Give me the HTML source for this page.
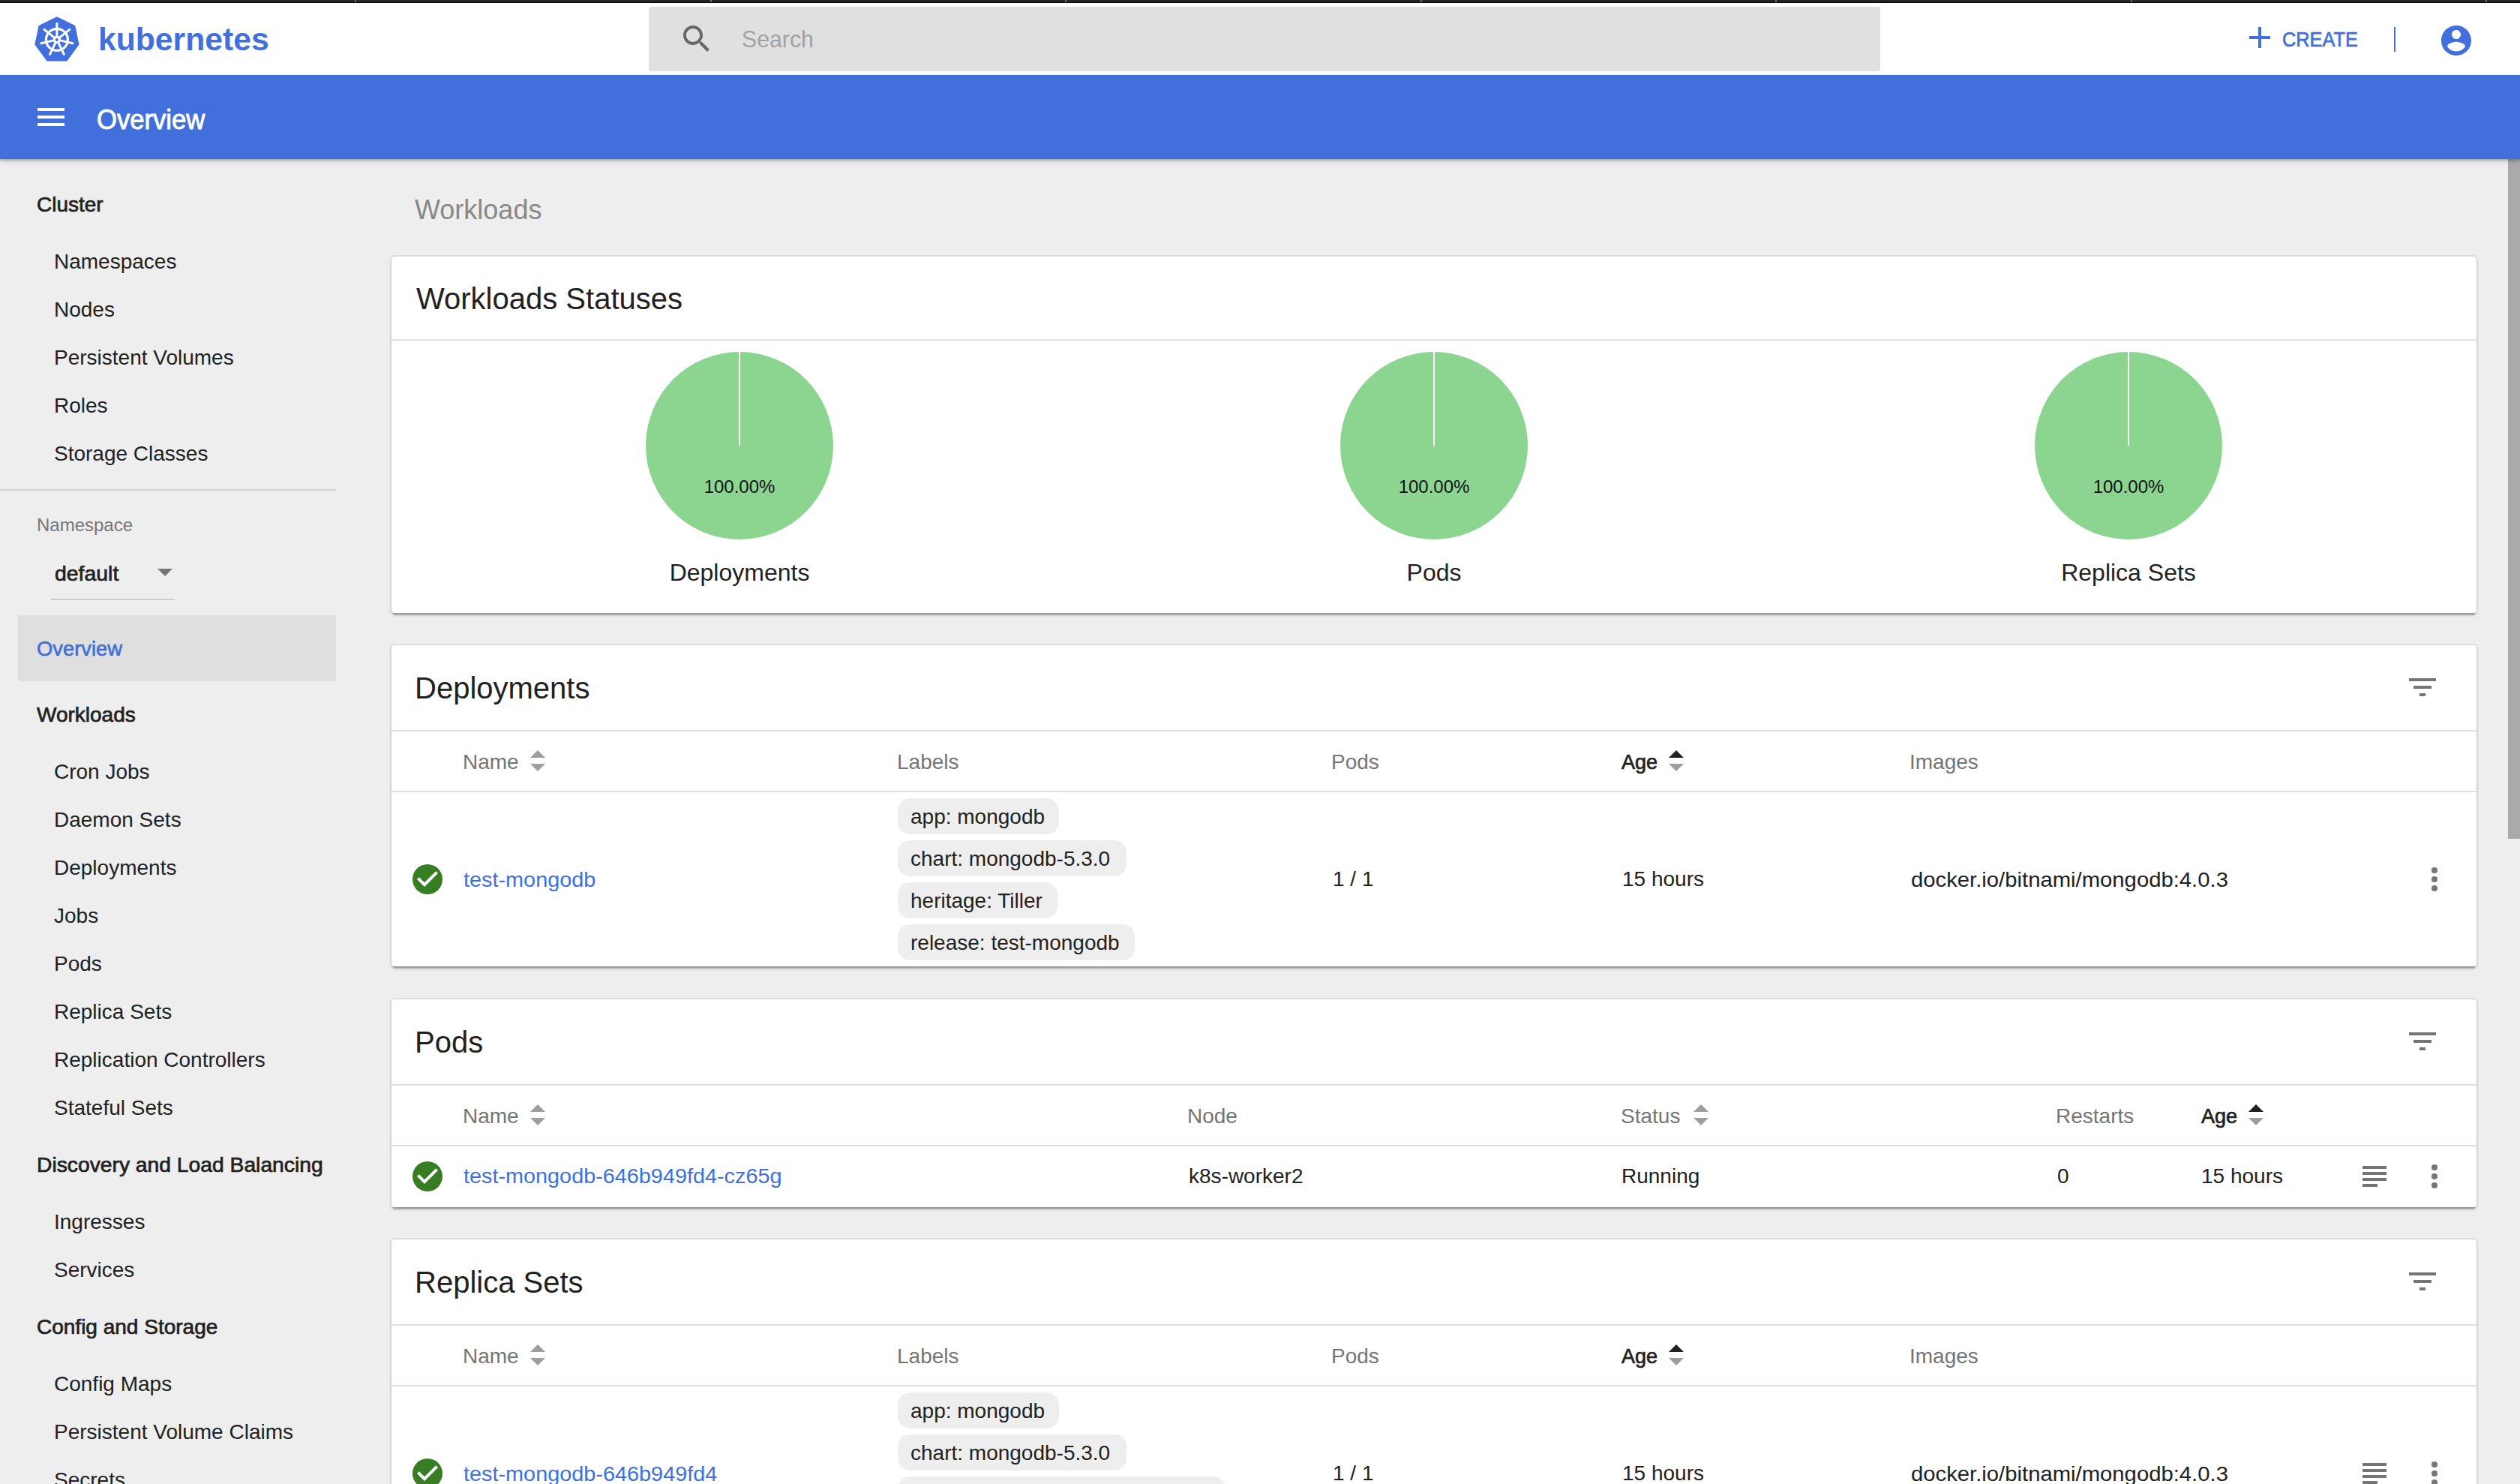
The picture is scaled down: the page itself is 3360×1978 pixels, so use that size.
<!DOCTYPE html>
<html><head><meta charset="utf-8"><title>Overview - Kubernetes Dashboard</title>
<style>
html,body{margin:0;padding:0;}
body{width:3360px;height:1978px;overflow:hidden;position:relative;background:#eeeeee;font-family:"Liberation Sans",sans-serif;}
body>div,body>svg{position:absolute;}
.t{white-space:nowrap;}
</style></head><body>
<div style="left:0px;top:0px;width:3360px;height:3px;background:#242424;"></div>
<div style="left:0px;top:3px;width:3360px;height:1px;background:#050505;"></div>
<div style="left:473px;top:0px;width:2px;height:3px;background:#6a6a6a;"></div>
<div style="left:947px;top:0px;width:2px;height:3px;background:#6a6a6a;"></div>
<div style="left:1420px;top:0px;width:2px;height:3px;background:#6a6a6a;"></div>
<div style="left:1894px;top:0px;width:2px;height:3px;background:#6a6a6a;"></div>
<div style="left:2367px;top:0px;width:2px;height:3px;background:#6a6a6a;"></div>
<div style="left:2841px;top:0px;width:2px;height:3px;background:#6a6a6a;"></div>
<div style="left:3314px;top:0px;width:2px;height:3px;background:#6a6a6a;"></div>
<div style="left:0px;top:4px;width:3360px;height:96px;background:#ffffff;"></div>
<svg style="left:40px;top:16px" width="72" height="72" viewBox="0 0 72 72"><polygon points="35.90,8.00 58.80,19.26 63.81,43.00 48.56,63.78 23.24,63.78 7.99,43.00 13.00,19.26" fill="#416fdc" stroke="#416fdc" stroke-width="3.2" stroke-linejoin="round"/><circle cx="35.900000000000006" cy="36.9" r="14.5" fill="none" stroke="#fff" stroke-width="3.2"/><line x1="35.900000000000006" y1="36.9" x2="35.90" y2="15.30" stroke="#fff" stroke-width="3" stroke-linecap="round"/><line x1="35.900000000000006" y1="36.9" x2="52.79" y2="23.43" stroke="#fff" stroke-width="3" stroke-linecap="round"/><line x1="35.900000000000006" y1="36.9" x2="56.96" y2="41.71" stroke="#fff" stroke-width="3" stroke-linecap="round"/><line x1="35.900000000000006" y1="36.9" x2="45.27" y2="56.36" stroke="#fff" stroke-width="3" stroke-linecap="round"/><line x1="35.900000000000006" y1="36.9" x2="26.53" y2="56.36" stroke="#fff" stroke-width="3" stroke-linecap="round"/><line x1="35.900000000000006" y1="36.9" x2="14.84" y2="41.71" stroke="#fff" stroke-width="3" stroke-linecap="round"/><line x1="35.900000000000006" y1="36.9" x2="19.01" y2="23.43" stroke="#fff" stroke-width="3" stroke-linecap="round"/><circle cx="35.900000000000006" cy="36.9" r="5.2" fill="#fff"/><circle cx="35.900000000000006" cy="36.9" r="2" fill="#416fdc"/></svg>
<div class="t" style="left:131px;top:29px;font-size:42px;line-height:47px;color:#416fdc;font-weight:bold;transform:scaleX(1.016);transform-origin:0 0;">kubernetes</div>
<div style="left:865px;top:9px;width:1642px;height:86px;background:#e0e0e0;border-radius:4px;"></div>
<svg style="left:905px;top:28px" width="48" height="48" viewBox="0 0 24 24"><path fill="#676767" d="M15.5 14h-.79l-.28-.27C15.41 12.59 16 11.11 16 9.5 16 5.91 13.09 3 9.5 3S3 5.91 3 9.5 5.91 16 9.5 16c1.61 0 3.09-.59 4.23-1.57l.27.28v.79l5 4.99L20.49 19l-4.99-5zm-6 0C7.01 14 5 11.99 5 9.5S7.01 5 9.5 5 14 7.01 14 9.5 11.99 14 9.5 14z"/></svg>
<div class="t" style="left:989px;top:34px;font-size:32px;line-height:36px;color:#a2a2a2;transform:scaleX(0.945);transform-origin:0 0;">Search</div>
<svg style="left:2989px;top:26px" width="48" height="48" viewBox="0 0 24 24"><path fill="#416fdc" d="M19 13h-6v6h-2v-6H5v-2h6V5h2v6h6v2z"/></svg>
<div class="t" style="left:3043px;top:37px;font-size:28px;line-height:31px;color:#416fdc;-webkit-text-stroke:0.7px #416fdc;transform:scaleX(0.904);transform-origin:0 0;">CREATE</div>
<div style="left:3192px;top:36px;width:2px;height:33px;background:#416fdc;"></div>
<svg style="left:3251px;top:30px" width="48" height="48" viewBox="0 0 24 24"><path fill="#416fdc" d="M12 2C6.48 2 2 6.48 2 12s4.48 10 10 10 10-4.48 10-10S17.52 2 12 2zm0 3c1.66 0 3 1.34 3 3s-1.34 3-3 3-3-1.34-3-3 1.34-3 3-3zm0 14.2c-2.5 0-4.71-1.28-6-3.22.03-1.99 4-3.08 6-3.08 1.99 0 5.97 1.09 6 3.08-1.29 1.94-3.5 3.22-6 3.22z"/></svg>
<div style="left:0px;top:100px;width:3360px;height:112px;background:#416fdc;box-shadow:0 2px 3px rgba(0,0,0,.22),0 3px 7px rgba(0,0,0,.12);z-index:2;"></div>
<svg style="z-index:3;left:44px;top:132px" width="48" height="48" viewBox="0 0 24 24"><path fill="#fff" d="M3 18h18v-2H3v2zm0-5h18v-2H3v2zm0-7v2h18V6H3z"/></svg>
<div class="t" style="left:129px;top:139px;font-size:36px;line-height:41px;color:#ffffff;-webkit-text-stroke:0.9px #ffffff;transform:scaleX(0.962);transform-origin:0 0;z-index:3;">Overview</div>
<div style="left:3344px;top:212px;width:16px;height:906px;background:#aaaaaa;"></div>
<div class="t" style="left:49px;top:257px;font-size:28px;line-height:31px;color:#212121;-webkit-text-stroke:0.7px #212121;">Cluster</div>
<div class="t" style="left:72px;top:333px;font-size:28px;line-height:31px;color:#212121;">Namespaces</div>
<div class="t" style="left:72px;top:397px;font-size:28px;line-height:31px;color:#212121;">Nodes</div>
<div class="t" style="left:72px;top:461px;font-size:28px;line-height:31px;color:#212121;">Persistent Volumes</div>
<div class="t" style="left:72px;top:525px;font-size:28px;line-height:31px;color:#212121;">Roles</div>
<div class="t" style="left:72px;top:589px;font-size:28px;line-height:31px;color:#212121;">Storage Classes</div>
<div style="left:0px;top:652px;width:448px;height:2px;background:#d3d3d3;"></div>
<div class="t" style="left:49px;top:686px;font-size:24px;line-height:27px;color:#757575;">Namespace</div>
<div class="t" style="left:73px;top:749px;font-size:28px;line-height:31px;color:#212121;-webkit-text-stroke:0.7px #212121;transform:scaleX(1.015);transform-origin:0 0;">default</div>
<svg style="left:210px;top:758px" width="20" height="11" viewBox="0 0 20 11"><polygon points="0,0 20,0 10,10" fill="#757575"/></svg>
<div style="left:68px;top:798px;width:165px;height:2px;background:#cdcdcd;"></div>
<div style="left:24px;top:820px;width:424px;height:88px;background:#dfdfdf;border-radius:4px;"></div>
<div class="t" style="left:49px;top:849px;font-size:28px;line-height:31px;color:#416fdc;-webkit-text-stroke:0.7px #416fdc;transform:scaleX(0.977);transform-origin:0 0;">Overview</div>
<div class="t" style="left:49px;top:937px;font-size:28px;line-height:31px;color:#212121;-webkit-text-stroke:0.7px #212121;">Workloads</div>
<div class="t" style="left:72px;top:1013px;font-size:28px;line-height:31px;color:#212121;">Cron Jobs</div>
<div class="t" style="left:72px;top:1077px;font-size:28px;line-height:31px;color:#212121;">Daemon Sets</div>
<div class="t" style="left:72px;top:1141px;font-size:28px;line-height:31px;color:#212121;">Deployments</div>
<div class="t" style="left:72px;top:1205px;font-size:28px;line-height:31px;color:#212121;">Jobs</div>
<div class="t" style="left:72px;top:1269px;font-size:28px;line-height:31px;color:#212121;">Pods</div>
<div class="t" style="left:72px;top:1333px;font-size:28px;line-height:31px;color:#212121;">Replica Sets</div>
<div class="t" style="left:72px;top:1397px;font-size:28px;line-height:31px;color:#212121;">Replication Controllers</div>
<div class="t" style="left:72px;top:1461px;font-size:28px;line-height:31px;color:#212121;">Stateful Sets</div>
<div class="t" style="left:49px;top:1537px;font-size:28px;line-height:31px;color:#212121;-webkit-text-stroke:0.7px #212121;transform:scaleX(1.009);transform-origin:0 0;">Discovery and Load Balancing</div>
<div class="t" style="left:72px;top:1613px;font-size:28px;line-height:31px;color:#212121;">Ingresses</div>
<div class="t" style="left:72px;top:1677px;font-size:28px;line-height:31px;color:#212121;">Services</div>
<div class="t" style="left:49px;top:1753px;font-size:28px;line-height:31px;color:#212121;-webkit-text-stroke:0.7px #212121;">Config and Storage</div>
<div class="t" style="left:72px;top:1829px;font-size:28px;line-height:31px;color:#212121;">Config Maps</div>
<div class="t" style="left:72px;top:1893px;font-size:28px;line-height:31px;color:#212121;">Persistent Volume Claims</div>
<div class="t" style="left:72px;top:1957px;font-size:28px;line-height:31px;color:#212121;">Secrets</div>
<div class="t" style="left:553px;top:259px;font-size:36px;line-height:41px;color:#888888;">Workloads</div>
<div style="left:522px;top:342px;width:2780px;height:475px;background:#fff;border-radius:4px;box-shadow:0 0 0 2px rgba(0,0,0,.07),0 5px 2px -2px rgba(0,0,0,.26),0 3px 6px 0 rgba(0,0,0,.08);"></div>
<div class="t" style="left:555px;top:376px;font-size:40px;line-height:44px;color:#212121;">Workloads Statuses</div>
<div style="left:522px;top:452px;width:2780px;height:2px;background:#e0e0e0;"></div>
<svg style="left:860px;top:468px" width="252" height="252" viewBox="0 0 252 252"><circle cx="126" cy="126" r="125" fill="#8cd591"/><rect x="125" y="0" width="2" height="126" fill="#fff"/></svg>
<div class="t" style="left:486px;width:1000px;text-align:center;top:635px;font-size:24px;line-height:27px;color:#111111;">100.00%</div>
<div class="t" style="left:486px;width:1000px;text-align:center;top:745px;font-size:32px;line-height:36px;color:#212121;">Deployments</div>
<svg style="left:1786px;top:468px" width="252" height="252" viewBox="0 0 252 252"><circle cx="126" cy="126" r="125" fill="#8cd591"/><rect x="125" y="0" width="2" height="126" fill="#fff"/></svg>
<div class="t" style="left:1412px;width:1000px;text-align:center;top:635px;font-size:24px;line-height:27px;color:#111111;">100.00%</div>
<div class="t" style="left:1412px;width:1000px;text-align:center;top:745px;font-size:32px;line-height:36px;color:#212121;">Pods</div>
<svg style="left:2712px;top:468px" width="252" height="252" viewBox="0 0 252 252"><circle cx="126" cy="126" r="125" fill="#8cd591"/><rect x="125" y="0" width="2" height="126" fill="#fff"/></svg>
<div class="t" style="left:2338px;width:1000px;text-align:center;top:635px;font-size:24px;line-height:27px;color:#111111;">100.00%</div>
<div class="t" style="left:2338px;width:1000px;text-align:center;top:745px;font-size:32px;line-height:36px;color:#212121;">Replica Sets</div>
<div style="left:522px;top:860px;width:2780px;height:428px;background:#fff;border-radius:4px;box-shadow:0 0 0 2px rgba(0,0,0,.07),0 5px 2px -2px rgba(0,0,0,.26),0 3px 6px 0 rgba(0,0,0,.08);"></div>
<div class="t" style="left:553px;top:895px;font-size:40px;line-height:44px;color:#212121;">Deployments</div>
<svg style="left:3206px;top:892px" width="48" height="48" viewBox="0 0 24 24"><path fill="#757575" d="M10 18h4v-2h-4v2zM3 6v2h18V6H3zm3 7h12v-2H6v2z"/></svg>
<div style="left:522px;top:973px;width:2780px;height:2px;background:#e0e0e0;"></div>
<div class="t" style="left:617px;top:1000px;font-size:28px;line-height:31px;color:#757575;">Name</div>
<div class="t" style="left:1196px;top:1000px;font-size:28px;line-height:31px;color:#757575;">Labels</div>
<div class="t" style="left:1775px;top:1000px;font-size:28px;line-height:31px;color:#757575;">Pods</div>
<div class="t" style="left:2162px;top:1000px;font-size:28px;line-height:31px;color:#212121;-webkit-text-stroke:0.7px #212121;transform:scaleX(0.966);transform-origin:0 0;">Age</div>
<div class="t" style="left:2546px;top:1000px;font-size:28px;line-height:31px;color:#757575;">Images</div>
<svg style="left:707px;top:1000px" width="20" height="28" viewBox="0 0 20 28"><polygon points="0,10 10,0 20,10" fill="#9e9e9e"/><polygon points="0,18 20,18 10,28" fill="#9e9e9e"/></svg>
<svg style="left:2225px;top:1000px" width="20" height="28" viewBox="0 0 20 28"><polygon points="0,10 10,0 20,10" fill="#212121"/><polygon points="0,18 20,18 10,28" fill="#9e9e9e"/></svg>
<div style="left:522px;top:1054px;width:2780px;height:2px;background:#e0e0e0;"></div>
<svg style="left:546px;top:1148px" width="48" height="48" viewBox="0 0 24 24"><circle cx="12" cy="12" r="10" fill="#377d22"/><path fill="#fff" d="M10 17l-5-5 1.41-1.41L10 14.17l7.59-7.59L19 8l-9 9z"/></svg>
<div class="t" style="left:618px;top:1157px;font-size:28px;line-height:31px;color:#416fdc;transform:scaleX(1.03);transform-origin:0 0;">test-mongodb</div>
<div style="left:1197px;top:1064px;width:215px;height:48px;background:#eeeeee;border-radius:16px;"></div>
<div class="t" style="left:1214px;top:1073px;font-size:28px;line-height:31px;color:#212121;">app: mongodb</div>
<div style="left:1197px;top:1120px;width:305px;height:48px;background:#eeeeee;border-radius:16px;"></div>
<div class="t" style="left:1214px;top:1129px;font-size:28px;line-height:31px;color:#212121;">chart: mongodb-5.3.0</div>
<div style="left:1197px;top:1176px;width:213px;height:48px;background:#eeeeee;border-radius:16px;"></div>
<div class="t" style="left:1214px;top:1185px;font-size:28px;line-height:31px;color:#212121;">heritage: Tiller</div>
<div style="left:1197px;top:1232px;width:316px;height:48px;background:#eeeeee;border-radius:16px;"></div>
<div class="t" style="left:1214px;top:1241px;font-size:28px;line-height:31px;color:#212121;">release: test-mongodb</div>
<div class="t" style="left:1777px;top:1156px;font-size:28px;line-height:31px;color:#212121;">1 / 1</div>
<div class="t" style="left:2163px;top:1156px;font-size:28px;line-height:31px;color:#212121;">15 hours</div>
<div class="t" style="left:2548px;top:1157px;font-size:28px;line-height:31px;color:#212121;transform:scaleX(1.045);transform-origin:0 0;">docker.io/bitnami/mongodb:4.0.3</div>
<svg style="left:3240px;top:1154px" width="12" height="36" viewBox="0 0 12 36"><circle cx="6" cy="6" r="4" fill="#757575"/><circle cx="6" cy="18" r="4" fill="#757575"/><circle cx="6" cy="30" r="4" fill="#757575"/></svg>
<div style="left:522px;top:1332px;width:2780px;height:277px;background:#fff;border-radius:4px;box-shadow:0 0 0 2px rgba(0,0,0,.07),0 5px 2px -2px rgba(0,0,0,.26),0 3px 6px 0 rgba(0,0,0,.08);"></div>
<div class="t" style="left:553px;top:1367px;font-size:40px;line-height:44px;color:#212121;">Pods</div>
<svg style="left:3206px;top:1364px" width="48" height="48" viewBox="0 0 24 24"><path fill="#757575" d="M10 18h4v-2h-4v2zM3 6v2h18V6H3zm3 7h12v-2H6v2z"/></svg>
<div style="left:522px;top:1445px;width:2780px;height:2px;background:#e0e0e0;"></div>
<div class="t" style="left:617px;top:1472px;font-size:28px;line-height:31px;color:#757575;">Name</div>
<div class="t" style="left:1583px;top:1472px;font-size:28px;line-height:31px;color:#757575;">Node</div>
<div class="t" style="left:2161px;top:1472px;font-size:28px;line-height:31px;color:#757575;">Status</div>
<div class="t" style="left:2741px;top:1472px;font-size:28px;line-height:31px;color:#757575;">Restarts</div>
<div class="t" style="left:2935px;top:1472px;font-size:28px;line-height:31px;color:#212121;-webkit-text-stroke:0.7px #212121;transform:scaleX(0.966);transform-origin:0 0;">Age</div>
<svg style="left:707px;top:1472px" width="20" height="28" viewBox="0 0 20 28"><polygon points="0,10 10,0 20,10" fill="#9e9e9e"/><polygon points="0,18 20,18 10,28" fill="#9e9e9e"/></svg>
<svg style="left:2258px;top:1472px" width="20" height="28" viewBox="0 0 20 28"><polygon points="0,10 10,0 20,10" fill="#9e9e9e"/><polygon points="0,18 20,18 10,28" fill="#9e9e9e"/></svg>
<svg style="left:2998px;top:1472px" width="20" height="28" viewBox="0 0 20 28"><polygon points="0,10 10,0 20,10" fill="#212121"/><polygon points="0,18 20,18 10,28" fill="#9e9e9e"/></svg>
<div style="left:522px;top:1526px;width:2780px;height:2px;background:#e0e0e0;"></div>
<svg style="left:546px;top:1544px" width="48" height="48" viewBox="0 0 24 24"><circle cx="12" cy="12" r="10" fill="#377d22"/><path fill="#fff" d="M10 17l-5-5 1.41-1.41L10 14.17l7.59-7.59L19 8l-9 9z"/></svg>
<div class="t" style="left:618px;top:1552px;font-size:28px;line-height:31px;color:#416fdc;transform:scaleX(1.029);transform-origin:0 0;">test-mongodb-646b949fd4-cz65g</div>
<div class="t" style="left:1585px;top:1552px;font-size:28px;line-height:31px;color:#212121;">k8s-worker2</div>
<div class="t" style="left:2162px;top:1552px;font-size:28px;line-height:31px;color:#212121;">Running</div>
<div class="t" style="left:2743px;top:1552px;font-size:28px;line-height:31px;color:#212121;">0</div>
<div class="t" style="left:2935px;top:1552px;font-size:28px;line-height:31px;color:#212121;">15 hours</div>
<svg style="left:3142px;top:1544px" width="48" height="48" viewBox="0 0 24 24"><path fill="#757575" d="M14 17H4v2h10v-2zm6-8H4v2h16V9zM4 15h16v-2H4v2zM4 5v2h16V5H4z"/></svg>
<svg style="left:3240px;top:1550px" width="12" height="36" viewBox="0 0 12 36"><circle cx="6" cy="6" r="4" fill="#757575"/><circle cx="6" cy="18" r="4" fill="#757575"/><circle cx="6" cy="30" r="4" fill="#757575"/></svg>
<div style="left:522px;top:1652px;width:2780px;height:600px;background:#fff;border-radius:4px;box-shadow:0 0 0 2px rgba(0,0,0,.07),0 5px 2px -2px rgba(0,0,0,.26),0 3px 6px 0 rgba(0,0,0,.08);"></div>
<div class="t" style="left:553px;top:1687px;font-size:40px;line-height:44px;color:#212121;">Replica Sets</div>
<svg style="left:3206px;top:1684px" width="48" height="48" viewBox="0 0 24 24"><path fill="#757575" d="M10 18h4v-2h-4v2zM3 6v2h18V6H3zm3 7h12v-2H6v2z"/></svg>
<div style="left:522px;top:1765px;width:2780px;height:2px;background:#e0e0e0;"></div>
<div class="t" style="left:617px;top:1792px;font-size:28px;line-height:31px;color:#757575;">Name</div>
<div class="t" style="left:1196px;top:1792px;font-size:28px;line-height:31px;color:#757575;">Labels</div>
<div class="t" style="left:1775px;top:1792px;font-size:28px;line-height:31px;color:#757575;">Pods</div>
<div class="t" style="left:2162px;top:1792px;font-size:28px;line-height:31px;color:#212121;-webkit-text-stroke:0.7px #212121;transform:scaleX(0.966);transform-origin:0 0;">Age</div>
<div class="t" style="left:2546px;top:1792px;font-size:28px;line-height:31px;color:#757575;">Images</div>
<svg style="left:707px;top:1792px" width="20" height="28" viewBox="0 0 20 28"><polygon points="0,10 10,0 20,10" fill="#9e9e9e"/><polygon points="0,18 20,18 10,28" fill="#9e9e9e"/></svg>
<svg style="left:2225px;top:1792px" width="20" height="28" viewBox="0 0 20 28"><polygon points="0,10 10,0 20,10" fill="#212121"/><polygon points="0,18 20,18 10,28" fill="#9e9e9e"/></svg>
<div style="left:522px;top:1846px;width:2780px;height:2px;background:#e0e0e0;"></div>
<svg style="left:546px;top:1940px" width="48" height="48" viewBox="0 0 24 24"><circle cx="12" cy="12" r="10" fill="#377d22"/><path fill="#fff" d="M10 17l-5-5 1.41-1.41L10 14.17l7.59-7.59L19 8l-9 9z"/></svg>
<div class="t" style="left:618px;top:1949px;font-size:28px;line-height:31px;color:#416fdc;transform:scaleX(1.03);transform-origin:0 0;">test-mongodb-646b949fd4</div>
<div style="left:1197px;top:1856px;width:215px;height:48px;background:#eeeeee;border-radius:16px;"></div>
<div class="t" style="left:1214px;top:1865px;font-size:28px;line-height:31px;color:#212121;">app: mongodb</div>
<div style="left:1197px;top:1912px;width:305px;height:48px;background:#eeeeee;border-radius:16px;"></div>
<div class="t" style="left:1214px;top:1921px;font-size:28px;line-height:31px;color:#212121;">chart: mongodb-5.3.0</div>
<div style="left:1197px;top:1968px;width:437px;height:48px;background:#eeeeee;border-radius:16px;"></div>
<div class="t" style="left:1214px;top:1977px;font-size:28px;line-height:31px;color:#212121;">pod-template-hash: 646b949fd4</div>
<div style="left:1197px;top:2024px;width:316px;height:48px;background:#eeeeee;border-radius:16px;"></div>
<div class="t" style="left:1214px;top:2033px;font-size:28px;line-height:31px;color:#212121;">release: test-mongodb</div>
<div class="t" style="left:1777px;top:1948px;font-size:28px;line-height:31px;color:#212121;">1 / 1</div>
<div class="t" style="left:2163px;top:1948px;font-size:28px;line-height:31px;color:#212121;">15 hours</div>
<div class="t" style="left:2548px;top:1949px;font-size:28px;line-height:31px;color:#212121;transform:scaleX(1.045);transform-origin:0 0;">docker.io/bitnami/mongodb:4.0.3</div>
<svg style="left:3142px;top:1940px" width="48" height="48" viewBox="0 0 24 24"><path fill="#757575" d="M14 17H4v2h10v-2zm6-8H4v2h16V9zM4 15h16v-2H4v2zM4 5v2h16V5H4z"/></svg>
<svg style="left:3240px;top:1946px" width="12" height="36" viewBox="0 0 12 36"><circle cx="6" cy="6" r="4" fill="#757575"/><circle cx="6" cy="18" r="4" fill="#757575"/><circle cx="6" cy="30" r="4" fill="#757575"/></svg>
</body></html>
